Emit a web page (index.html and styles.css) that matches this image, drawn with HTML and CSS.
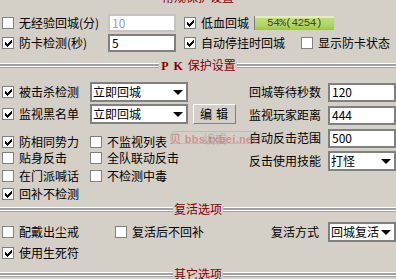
FILE: index.html
```html
<!DOCTYPE html>
<html lang="zh-CN">
<head>
    <meta charset="UTF-8">
    <title>保护设置</title>
    <link rel="stylesheet" href="styles.css">
</head>
<body>

<div class="panel">
    <div class="sep sep-top"><span>常规保护设置</span></div>

    <div class="top">
        <div class="row">
            <label class="chk w106"><span class="cb"></span>无经验回城(分)</label>
            <span class="field off">10</span>
            <label class="chk ml8"><span class="cb"><svg width="7" height="7"><path d="M0 2h1v3h-1zM1 3h1v3h-1zM2 4h1v3h-1zM3 3h1v3h-1zM4 2h1v3h-1zM5 1h1v3h-1zM6 0h1v3h-1z"/></svg></span>低血回城</label>
            <div class="bar"><span>54%(4254)</span></div>
        </div>
        <div class="row">
            <label class="chk w106"><span class="cb"><svg width="7" height="7"><path d="M0 2h1v3h-1zM1 3h1v3h-1zM2 4h1v3h-1zM3 3h1v3h-1zM4 2h1v3h-1zM5 1h1v3h-1zM6 0h1v3h-1z"/></svg></span>防卡检测(秒)</label>
            <span class="field">5</span>
            <label class="chk ml8"><span class="cb"><svg width="7" height="7"><path d="M0 2h1v3h-1zM1 3h1v3h-1zM2 4h1v3h-1zM3 3h1v3h-1zM4 2h1v3h-1zM5 1h1v3h-1zM6 0h1v3h-1z"/></svg></span>自动停挂时回城</label>
            <label class="chk ml16"><span class="cb"></span>显示防卡状态</label>
        </div>
    </div>

    <div class="sep sep-pk"><span><b>PK</b>保护设置</span></div>

    <div class="pk">
        <div class="pk-left">
            <div class="row">
                <label class="chk w88"><span class="cb"><svg width="7" height="7"><path d="M0 2h1v3h-1zM1 3h1v3h-1zM2 4h1v3h-1zM3 3h1v3h-1zM4 2h1v3h-1zM5 1h1v3h-1zM6 0h1v3h-1z"/></svg></span>被击杀检测</label>
                <div class="sel w98"><span>立即回城</span><i class="arrow"></i></div>
            </div>
            <div class="row mt2">
                <label class="chk w88"><span class="cb"><svg width="7" height="7"><path d="M0 2h1v3h-1zM1 3h1v3h-1zM2 4h1v3h-1zM3 3h1v3h-1zM4 2h1v3h-1zM5 1h1v3h-1zM6 0h1v3h-1z"/></svg></span>监视黑名单</label>
                <div class="sel w98"><span>立即回城</span><i class="arrow"></i></div>
                <button class="btn">编辑</button>
            </div>
            <div class="row small mt10">
                <label class="chk w88"><span class="cb"><svg width="7" height="7"><path d="M0 2h1v3h-1zM1 3h1v3h-1zM2 4h1v3h-1zM3 3h1v3h-1zM4 2h1v3h-1zM5 1h1v3h-1zM6 0h1v3h-1z"/></svg></span>防相同势力</label>
                <label class="chk"><span class="cb"></span>不监视列表</label>
            </div>
            <div class="row small">
                <label class="chk w88"><span class="cb"></span>贴身反击</label>
                <label class="chk"><span class="cb"></span>全队联动反击</label>
            </div>
            <div class="row small mt2">
                <label class="chk w88"><span class="cb"></span>在门派喊话</label>
                <label class="chk"><span class="cb"></span>不检测中毒</label>
            </div>
            <div class="row small mt2">
                <label class="chk"><span class="cb"><svg width="7" height="7"><path d="M0 2h1v3h-1zM1 3h1v3h-1zM2 4h1v3h-1zM3 3h1v3h-1zM4 2h1v3h-1zM5 1h1v3h-1zM6 0h1v3h-1z"/></svg></span>回补不检测</label>
            </div>
        </div>

        <div class="pk-right">
            <div class="row"><span class="lbl">回城等待秒数</span><span class="field tall">120</span></div>
            <div class="row"><span class="lbl">监视玩家距离</span><span class="field tall">444</span></div>
            <div class="row"><span class="lbl">自动反击范围</span><span class="field tall">500</span></div>
            <div class="row"><span class="lbl">反击使用技能</span><div class="sel w68"><span>打怪</span><i class="arrow"></i></div></div>
        </div>
    </div>

    <div class="sep sep-revive"><span>复活选项</span></div>

    <div class="revive">
        <div class="row">
            <label class="chk w113"><span class="cb"></span>配戴出尘戒</label>
            <label class="chk"><span class="cb"></span>复活后不回补</label>
            <span class="lbl-auto">复活方式</span>
            <div class="sel w68"><span>回城复活</span><i class="arrow"></i></div>
        </div>
        <div class="row small mt3">
            <label class="chk"><span class="cb"><svg width="7" height="7"><path d="M0 2h1v3h-1zM1 3h1v3h-1zM2 4h1v3h-1zM3 3h1v3h-1zM4 2h1v3h-1zM5 1h1v3h-1zM6 0h1v3h-1z"/></svg></span>使用生死符</label>
        </div>
    </div>

    <div class="sep sep-other"><span>其它选项</span></div>

    <div class="watermark">
        <span class="wm-box">编辑</span>
        <span class="wm-text">贝 bbs.txbei.net</span>
    </div>
</div>

</body>
</html>
```

FILE: styles.css
```css
body {
    margin: 0;
    background: #d4d0c8;
    font-family: "Noto Sans CJK SC", "Noto Sans", sans-serif;
    font-size: 12px;
    color: #000;
    overflow: hidden;
}
.panel {
    position: relative;
    width: 396px;
    height: 279px;
    overflow: hidden;
}

/* section titles with grooved lines */
.sep {
    display: flex;
    align-items: center;
    height: 12px;
    line-height: 12px;
    color: #800000;
}
.sep::before,
.sep::after {
    content: "";
    flex: 1;
    height: 5px;
    background: linear-gradient(#fff 0 1px, #a0a0a0 1px 3px, #fff 3px 4px, #a0a0a0 4px 5px);
}
.sep span {
    padding: 0 1px;
    white-space: nowrap;
}
.sep b {
    font-family: "Liberation Serif", serif;
    font-weight: bold;
    letter-spacing: 5px;
    margin-left: 1px;
}
.sep-top {
    margin-top: -9px;
}
.sep-pk {
    margin-top: 6px;
}
.sep-revive {
    margin-top: 1px;
}
.sep-other {
    margin-top: 7px;
}

.row {
    display: flex;
    align-items: center;
    height: 20px;
    white-space: nowrap;
}
.row.small {
    height: 16px;
}
.mt2 { margin-top: 2px; }
.mt3 { margin-top: 3px; }
.mt10 { margin-top: 10px; }

.chk {
    display: flex;
    align-items: center;
    line-height: 14px;
}
.cb {
    flex: none;
    width: 10px;
    height: 10px;
    border: 1px solid #808080;
    background: #fff;
    margin-right: 5px;
}
.cb svg {
    display: block;
    margin: 2px 0 0 2px;
}
.w88 { width: 88px; }
.w106 { width: 106px; }
.w113 { width: 113px; }
.ml8 { margin-left: 8px; }
.ml16 { margin-left: 16px; }

.field {
    box-sizing: border-box;
    width: 68px;
    height: 18px;
    border: 2px solid #808080;
    background: #fff;
    padding-left: 2px;
    line-height: 14px;
    flex: none;
}
.field.tall {
    height: 19px;
}
.field.off {
    border-color: #c4c4c4;
    color: #a0a0a0;
}

.bar {
    box-sizing: border-box;
    width: 80px;
    height: 14px;
    margin-left: 5px;
    border-left: 1px solid #808080;
    background: linear-gradient(#e2f0b8 0 2px, #c0de7c 2px, #b0d45e 70%, #9cc444);
    display: flex;
    align-items: center;
    justify-content: center;
    font-family: "Liberation Mono", monospace;
    font-size: 11px;
    letter-spacing: -0.5px;
    color: #3c4a20;
}

.top {
    padding-top: 10px;
    padding-left: 2px;
}

.pk {
    display: flex;
    padding-top: 11px;
}
.pk-left {
    width: 247px;
    padding-left: 2px;
}
.pk-right {
    display: flex;
    flex-direction: column;
    gap: 3px;
}
.lbl {
    width: 72px;
    text-align: right;
    margin-right: 7px;
    line-height: 14px;
}

.sel {
    box-sizing: border-box;
    height: 20px;
    border: 2px solid #808080;
    background: #fff;
    padding: 0 3px 0 1px;
    display: flex;
    align-items: center;
    justify-content: space-between;
    line-height: 14px;
    flex: none;
}
.w98 { width: 98px; }
.w68 { width: 68px; }
.arrow {
    width: 0;
    height: 0;
    border-left: 5px solid transparent;
    border-right: 5px solid transparent;
    border-top: 5px solid #000;
}

.btn {
    box-sizing: border-box;
    width: 43px;
    height: 20px;
    margin-left: 5px;
    padding: 0 0 0 6px;
    background: #d4d0c8;
    border: 1px solid;
    border-color: #fff #808080 #808080 #fff;
    font: inherit;
    letter-spacing: 4px;
    text-align: left;
    line-height: 16px;
}

.revive {
    padding-top: 7px;
    padding-left: 2px;
}
.lbl-auto {
    margin-left: auto;
    margin-right: 9px;
    line-height: 14px;
}

/* site watermark lying over the form */
.watermark {
    position: absolute;
    left: 140px;
    top: 131px;
    display: flex;
    align-items: center;
    height: 14px;
    pointer-events: none;
}
.wm-box {
    position: absolute;
    left: 30px;
    top: 0;
    width: 92px;
    height: 13px;
    border: 1px solid rgba(150, 150, 150, 0.35);
    border-radius: 5px;
    color: rgba(120, 120, 120, 0.35);
    padding-left: 32px;
    box-sizing: border-box;
    line-height: 13px;
}
.wm-text {
    margin-left: 30px;
    font-family: "Liberation Sans", sans-serif;
    font-weight: bold;
    font-size: 11px;
    color: rgba(210, 90, 90, 0.55);
    letter-spacing: 0.3px;
}
```
